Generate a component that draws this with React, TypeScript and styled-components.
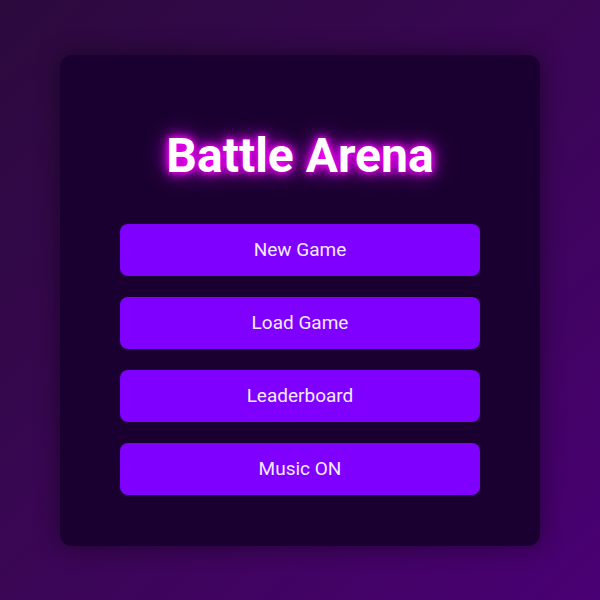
import styled, { createGlobalStyle } from 'styled-components';

const GlobalStyle = createGlobalStyle`
  html, body {
    margin: 0;
    padding: 0;
  }
  body {
    font-family: Roboto, "Liberation Sans", sans-serif;
  }
`;

const Page = styled.div`
  width: 600px;
  height: 600px;
  display: flex;
  align-items: center;
  justify-content: center;
  background: linear-gradient(135deg, #2b0a3d 0%, #3a0655 50%, #4a0074 100%);
`;

const Card = styled.div`
  width: 480px;
  box-sizing: border-box;
  padding: 40px 60px 51px;
  background: #1a0030;
  border-radius: 12px;
  box-shadow: 0 0 24px rgba(0, 0, 0, 0.45);
  display: flex;
  flex-direction: column;
  align-items: stretch;
`;

const Title = styled.h1`
  margin: 33px 0 40px;
  font-size: 48px;
  line-height: 56px;
  font-weight: 700;
  color: #ffffff;
  text-align: center;
  text-shadow: 0 0 6px #ff00ff, 0 0 12px #ff00ff, 0 0 22px #d000ff;
`;

const Menu = styled.div`
  display: flex;
  flex-direction: column;
  gap: 21px;
`;

const MenuButton = styled.button`
  height: 52px;
  border: none;
  border-radius: 8px;
  background: #8000ff;
  color: #f4eaff;
  font-family: Roboto, "Liberation Sans", sans-serif;
  font-size: 19px;
  cursor: pointer;
`;

const items = ['New Game', 'Load Game', 'Leaderboard', 'Music ON'];

export default function App() {
  return (
    <>
      <GlobalStyle />
      <Page>
        <Card>
          <Title>Battle Arena</Title>
          <Menu>
            {items.map((label) => (
              <MenuButton key={label}>{label}</MenuButton>
            ))}
          </Menu>
        </Card>
      </Page>
    </>
  );
}
